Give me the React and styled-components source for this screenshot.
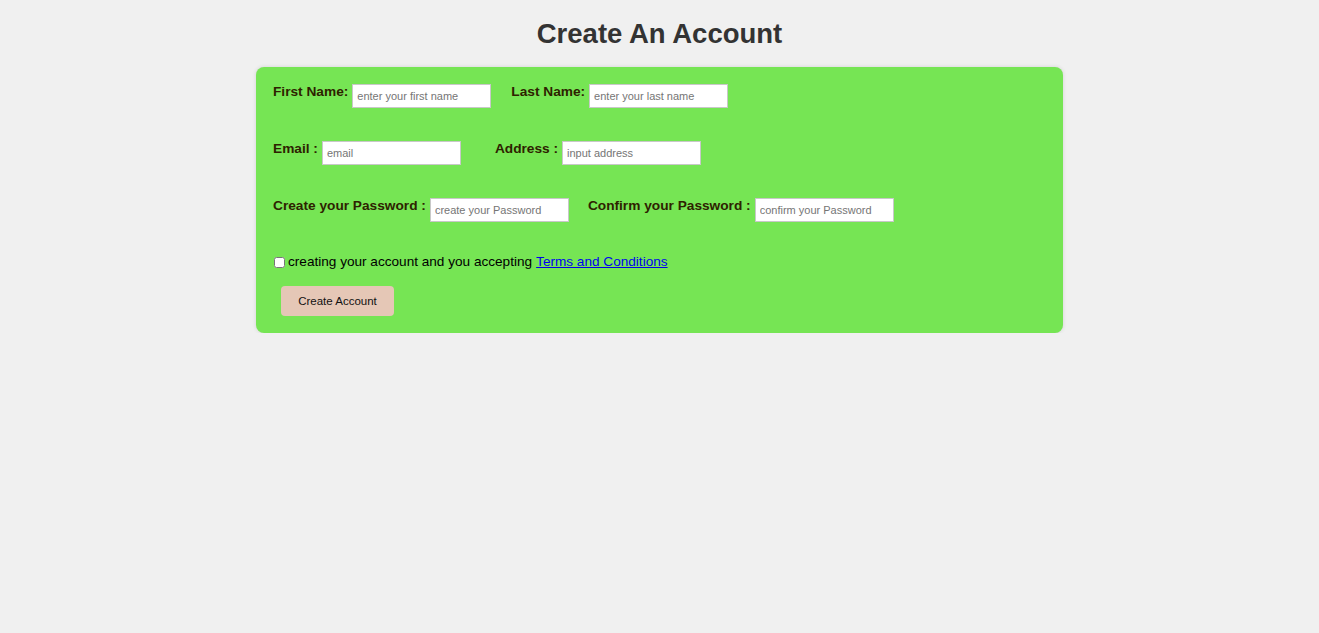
import React from "react";
import styled, { createGlobalStyle } from "styled-components";

const GlobalStyle = createGlobalStyle`
  html, body {
    margin: 0;
    padding: 0;
    background: #f0f0f0;
    font-family: "Liberation Sans", Arial, sans-serif;
  }
`;

const Page = styled.div`
  display: flex;
  flex-direction: column;
  align-items: center;
  padding-top: 18px;
`;

const Title = styled.h1`
  margin: 0 0 18px;
  font-size: 27.5px;
  line-height: 31px;
  font-weight: bold;
  color: #333333;
`;

const Card = styled.form`
  width: 807px;
  box-sizing: border-box;
  background: #76e554;
  border-radius: 8px;
  padding: 16px 17px 17px;
  box-shadow: 0 0 4px rgba(0, 0, 0, 0.12);
`;

const Row = styled.div`
  display: flex;
  align-items: flex-start;
  height: 25px;
  margin-bottom: 32px;
`;

const Field = styled.div`
  display: flex;
  align-items: flex-start;
  gap: 4px;
  margin-right: ${(p) => p.$space || 20}px;
`;

const Label = styled.label`
  padding-top: 1px;
  font-size: 13.7px;
  line-height: 16px;
  font-weight: bold;
  color: #2e2200;
  white-space: nowrap;
`;

const Input = styled.input`
  box-sizing: border-box;
  width: 139px;
  height: 24px;
  margin: 1px 0 0;
  padding: 0 4px 1px;
  border: 1px solid #c8c8c8;
  background: #ffffff;
  font-family: "Liberation Sans", Arial, sans-serif;
  font-size: 11px;
  color: #222;
  outline: none;
  &::placeholder {
    color: #757575;
  }
`;

const AgreeRow = styled.div`
  display: flex;
  align-items: center;
  height: 16px;
  font-size: 13.6px;
  line-height: 16px;
  color: #000;
`;

const Check = styled.input`
  width: 11px;
  height: 11px;
  margin: 0 3px 0 1px;
`;

const Link = styled.a`
  color: #0000ee;
  text-decoration: underline;
  margin-left: 4px;
`;

const Button = styled.button`
  margin: 16px 0 0 8px;
  width: 113px;
  height: 30px;
  border: none;
  border-radius: 4px;
  background: #e5c7b6;
  font-family: "Liberation Sans", Arial, sans-serif;
  font-size: 11.5px;
  color: #111;
  cursor: pointer;
`;

export default function App() {
  return (
    <>
      <GlobalStyle />
      <Page>
        <Title>Create An Account</Title>
        <Card onSubmit={(e) => e.preventDefault()}>
          <Row>
            <Field>
              <Label>First Name:</Label>
              <Input placeholder="enter your first name" />
            </Field>
            <Field>
              <Label>Last Name:</Label>
              <Input placeholder="enter your last name" />
            </Field>
          </Row>
          <Row>
            <Field $space={34}>
              <Label>Email :</Label>
              <Input placeholder="email" />
            </Field>
            <Field>
              <Label>Address :</Label>
              <Input placeholder="input address" />
            </Field>
          </Row>
          <Row>
            <Field $space={19}>
              <Label>Create your Password :</Label>
              <Input type="password" placeholder="create your Password" />
            </Field>
            <Field>
              <Label>Confirm your Password :</Label>
              <Input type="password" placeholder="confirm your Password" />
            </Field>
          </Row>
          <AgreeRow>
            <Check type="checkbox" />
            creating your account and you accepting
            <Link href="#">Terms and Conditions</Link>
          </AgreeRow>
          <Button type="submit">Create Account</Button>
        </Card>
      </Page>
    </>
  );
}
